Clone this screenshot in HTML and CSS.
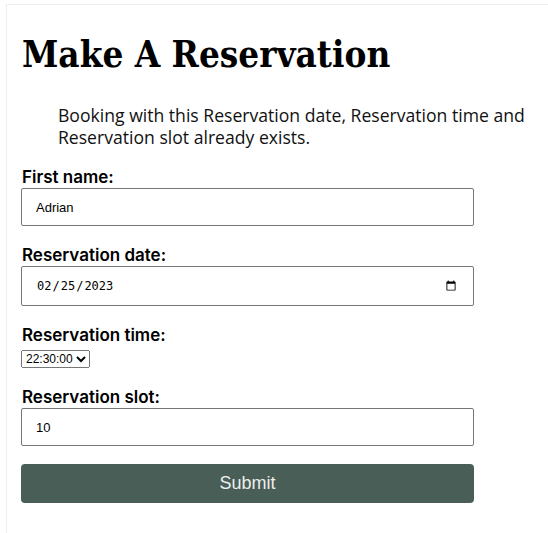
FILE: index.html
```html
<!DOCTYPE html>
<html>
<head>
<meta charset="utf-8">
<link rel="stylesheet" href="styles.css">
</head>
<body>
<div class="card">
  <h1 class="title">Make A Reservation</h1>
  <ul class="errors"><li>Booking with this Reservation date, Reservation time and Reservation slot already exists.</li></ul>
  <form class="form">
    <div class="field">
      <label class="label" for="fn">First name:</label>
      <input class="text-input" id="fn" type="text" value="Adrian">
    </div>
    <div class="field">
      <label class="label" for="rd">Reservation date:</label>
      <input class="text-input date-input" id="rd" type="date" value="2023-02-25">
    </div>
    <div class="field">
      <label class="label" for="rt">Reservation time:</label>
      <select class="time-select" id="rt"><option>22:30:00</option></select>
    </div>
    <div class="field">
      <label class="label" for="rs">Reservation slot:</label>
      <input class="text-input" id="rs" type="number" value="10">
    </div>
    <button class="submit" type="button">Submit</button>
  </form>
</div>
</body>
</html>
```
FILE: styles.css
```css
html, body { margin: 0; padding: 0; background: #fff; }
.card {
  margin: 4px 0 0 6px;
  border-top: 1px solid #eeeeee;
  border-left: 1px solid #eeeeee;
  padding: 0 0 40px 14px;
  min-height: 600px;
}
.title {
  font-family: "DejaVu Serif", serif;
  font-stretch: condensed;
  font-weight: 700;
  font-size: 36.5px;
  line-height: 1;
  margin: 0;
  padding: 32px 0 0 1px;
  color: #000;
}
.errors {
  list-style: none;
  margin: 30.5px 0 0 0;
  padding: 0 0 0 37px;
  font-family: "Open Sans", sans-serif;
  font-size: 17.6px;
  line-height: 22px;
  color: #111;
}
.form { display: flex; flex-direction: column; margin-top: 18px; }
.field { display: flex; flex-direction: column; align-items: flex-start; margin-bottom: 18px; }
.label {
  font-family: "Inter", sans-serif;
  font-weight: 600;
  font-size: 17px;
  line-height: 22px;
  color: #000;
  padding-left: 1px;
}
.text-input {
  box-sizing: border-box;
  width: 453px;
  height: 38px;
  margin: 0;
  padding: 0 14px;
  border: 1px solid #767676;
  border-radius: 2px;
  font-family: "Liberation Sans", Arial, sans-serif;
  font-size: 13px;
}
.date-input { height: 40px; font-family: "DejaVu Sans Mono", monospace; font-size: 12px; }
.time-select {
  margin: 4px 0 0 0;
  font-family: "Liberation Sans", Arial, sans-serif;
  font-size: 12px;
  padding: 0;
}
.submit {
  width: 453px;
  height: 39px;
  background: #495e57;
  color: #edefee;
  border: none;
  border-radius: 4px;
  font-family: "Liberation Sans", Arial, sans-serif;
  font-size: 18px;
  margin-top: 0;
}
```
